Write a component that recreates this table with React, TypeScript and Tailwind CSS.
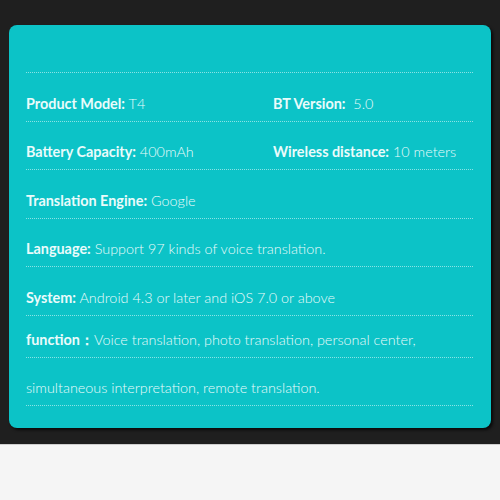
const rows = [
  { h: "h-[49px]", cells: [["Product Model:", " T4"], ["BT Version:", "\u00a0 5.0"]] },
  { h: "h-[48px]", cells: [["Battery Capacity:", " 400mAh"], ["Wireless distance:", " 10 meters"]] },
  { h: "h-[49px]", cells: [["Translation Engine:", " Google"]] },
  { h: "h-[48px]", cells: [["Language:", " Support 97 kinds of voice translation."]] },
  { h: "h-[49px]", cells: [["System:", " Android 4.3 or later and iOS 7.0 or above"]] },
  { h: "h-[42px]", cells: [["function\uff1a", "Voice translation, photo translation, personal center,"]] },
  { h: "h-[48px]", cells: [["", "simultaneous interpretation, remote translation."]] },
]

export default function App() {
  return (
    <div className="w-[500px] h-[500px] bg-[#f5f5f5] font-['Lato',sans-serif]">
      <div className="h-[445px] bg-[#1f1f1f] pt-[25px] px-[9px] border-b border-[#cfcfcf]">
        <div className="h-[403px] rounded-[8px] bg-[#0cc3c7] pt-[47px] pl-[17px] pr-[18px] shadow-[2px_2px_3px_rgba(0,0,0,0.7)]">
          <div className="border-t border-dotted border-[#8ae3e5]">
            {rows.map((row, i) => (
              <div
                key={i}
                className={`${row.h} border-b border-dotted border-[#8ae3e5] flex items-end pb-[7px] text-[14.4px] leading-[20px] text-[#eafbfb]`}
              >
                {row.cells.map(([label, value], j) => (
                  <div key={j} className={j === 0 && row.cells.length > 1 ? "w-[247px]" : ""}>
                    {label && <span className="font-bold">{label}</span>}
                    <span className="font-light whitespace-pre">{value}</span>
                  </div>
                ))}
              </div>
            ))}
          </div>
        </div>
      </div>
    </div>
  )
}
